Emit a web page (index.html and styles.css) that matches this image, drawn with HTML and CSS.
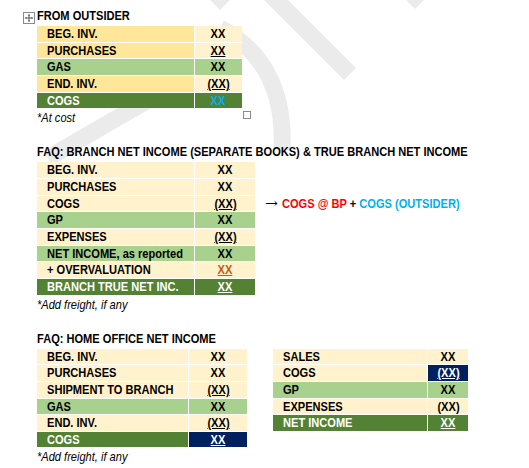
FILE: index.html
```html
<!DOCTYPE html>
<html lang="en">
<head>
    <meta charset="UTF-8">
    <meta name="viewport" content="width=device-width, initial-scale=1.0">
    <title>Branch Accounting - COGS Notes</title>
    <link rel="stylesheet" href="styles.css">
</head>
<body>
    <div class="page">
        <!-- faint logo watermark behind the sheets -->
        <svg class="watermark" width="529" height="468" viewBox="0 0 529 468">
            <g fill="none" stroke="#ebebeb" stroke-width="17">
                <line x1="266" y1="-10" x2="350" y2="74"/>
                <line x1="212" y1="-10" x2="226" y2="4"/>
                <line x1="408" y1="-10" x2="421" y2="3"/>
                <path d="M 220 28 C 262 50 285 90 282 150"/>
                <line x1="48" y1="158" x2="150" y2="99"/>
            </g>
        </svg>

        <section class="block">
            <h2 class="title">
                <span class="move-handle">
                    <svg width="12" height="12" viewBox="0 0 12 12">
                        <rect x="0.5" y="0.5" width="11" height="11" fill="#fff" stroke="#8a8a8a"/>
                        <path d="M6 2.5 V9.5 M2.5 6 H9.5" stroke="#555" stroke-width="1"/>
                        <path d="M6 2 L4.8 3.4 H7.2 Z M6 10 L4.8 8.6 H7.2 Z M2 6 L3.4 4.8 V7.2 Z M10 6 L8.6 4.8 V7.2 Z" fill="#555"/>
                    </svg>
                </span>
                <span class="txt">FROM OUTSIDER</span>
            </h2>
            <div class="sheet sheet-outsider">
                <div class="cell label gold"><span class="txt">BEG. INV.</span></div><div class="cell value cream"><span class="txt">XX</span></div>
                <div class="cell label gold"><span class="txt">PURCHASES</span></div><div class="cell value cream"><span class="txt"><u>XX</u></span></div>
                <div class="cell label green"><span class="txt">GAS</span></div><div class="cell value green"><span class="txt">XX</span></div>
                <div class="cell label gold"><span class="txt">END. INV.</span></div><div class="cell value cream"><span class="txt"><u>(XX)</u></span></div>
                <div class="cell label dark"><span class="txt">COGS</span></div><div class="cell value dark cyan-text"><span class="txt">XX</span></div>
            </div>
            <span class="resize-handle"></span>
            <p class="note"><span class="txt">*At cost</span></p>
        </section>

        <section class="block">
            <h2 class="title"><span class="txt">FAQ: BRANCH NET INCOME (SEPARATE BOOKS) &amp; TRUE BRANCH NET INCOME</span></h2>
            <div class="with-side">
                <div class="sheet sheet-branch">
                    <div class="cell label cream"><span class="txt">BEG. INV.</span></div><div class="cell value cream"><span class="txt">XX</span></div>
                    <div class="cell label cream"><span class="txt">PURCHASES</span></div><div class="cell value cream"><span class="txt">XX</span></div>
                    <div class="cell label cream"><span class="txt">COGS</span></div><div class="cell value cream"><span class="txt"><u>(XX)</u></span></div>
                    <div class="cell label green"><span class="txt">GP</span></div><div class="cell value green"><span class="txt">XX</span></div>
                    <div class="cell label cream"><span class="txt">EXPENSES</span></div><div class="cell value cream"><span class="txt"><u>(XX)</u></span></div>
                    <div class="cell label green"><span class="txt">NET INCOME, as reported</span></div><div class="cell value green"><span class="txt">XX</span></div>
                    <div class="cell label cream"><span class="txt">+ OVERVALUATION</span></div><div class="cell value cream orange-text"><span class="txt"><u>XX</u></span></div>
                    <div class="cell label dark"><span class="txt">BRANCH TRUE NET INC.</span></div><div class="cell value dark"><span class="txt"><u>XX</u></span></div>
                </div>
                <p class="side-note"><span class="arrow">&rarr;</span><span class="txt"><span class="red-text">COGS @ BP</span> + <span class="cyan-text">COGS (OUTSIDER)</span></span></p>
            </div>
            <p class="note"><span class="txt">*Add freight, if any</span></p>
        </section>

        <section class="block">
            <h2 class="title"><span class="txt">FAQ: HOME OFFICE NET INCOME</span></h2>
            <div class="with-side">
                <div>
                    <div class="sheet sheet-home">
                        <div class="cell label cream"><span class="txt">BEG. INV.</span></div><div class="cell value cream"><span class="txt">XX</span></div>
                        <div class="cell label cream"><span class="txt">PURCHASES</span></div><div class="cell value cream"><span class="txt">XX</span></div>
                        <div class="cell label cream"><span class="txt">SHIPMENT TO BRANCH</span></div><div class="cell value cream"><span class="txt"><u>(XX)</u></span></div>
                        <div class="cell label green"><span class="txt">GAS</span></div><div class="cell value green"><span class="txt">XX</span></div>
                        <div class="cell label cream"><span class="txt">END. INV.</span></div><div class="cell value cream"><span class="txt"><u>(XX)</u></span></div>
                        <div class="cell label dark"><span class="txt">COGS</span></div><div class="cell value navy"><span class="txt"><u>XX</u></span></div>
                    </div>
                    <p class="note"><span class="txt">*Add freight, if any</span></p>
                </div>
                <div class="sheet sheet-income">
                    <div class="cell label cream"><span class="txt">SALES</span></div><div class="cell value cream"><span class="txt">XX</span></div>
                    <div class="cell label cream"><span class="txt">COGS</span></div><div class="cell value navy"><span class="txt"><u>(XX)</u></span></div>
                    <div class="cell label green"><span class="txt">GP</span></div><div class="cell value green"><span class="txt">XX</span></div>
                    <div class="cell label cream"><span class="txt">EXPENSES</span></div><div class="cell value cream"><span class="txt">(XX)</span></div>
                    <div class="cell label dark"><span class="txt">NET INCOME</span></div><div class="cell value dark"><span class="txt"><u>XX</u></span></div>
                </div>
            </div>
        </section>
    </div>
</body>
</html>
```

FILE: styles.css
```css
body {
    margin: 0;
    background-color: #fff;
    font-family: 'Liberation Sans', Arial, sans-serif;
    font-size: 13.5px;
    color: #000;
}

.page {
    position: relative;
    width: 529px;
    height: 468px;
    padding: 9px 0 0 37px;
    box-sizing: border-box;
    overflow: hidden;
}

.watermark {
    position: absolute;
    left: 0;
    top: 0;
    z-index: -1;
}

/* no narrow face installed: squeeze Arial-metric text like Arial Narrow */
.txt {
    display: inline-block;
    transform: scaleX(0.82);
    transform-origin: left center;
}

.value .txt {
    transform-origin: center center;
}

.block {
    position: relative;
    margin-bottom: 20px;
}

.title {
    position: relative;
    margin: 0 0 3px;
    font-size: 13.5px;
    line-height: 14px;
    font-weight: bold;
    white-space: nowrap;
}

.move-handle {
    position: absolute;
    left: -14px;
    top: 3px;
    width: 12px;
    height: 12px;
}

.move-handle svg {
    display: block;
}

.resize-handle {
    position: absolute;
    left: 206px;
    top: 102px;
    width: 6px;
    height: 6px;
    border: 1px solid #8a8a8a;
    background: #fff;
}

.sheet {
    display: grid;
    grid-auto-rows: 15.67px;
    gap: 1px;
    background-color: #fff;
    font-weight: bold;
    line-height: 15.67px;
}

.sheet-outsider {
    grid-template-columns: 157px 47px;
    width: 205px;
}

.sheet-branch {
    grid-template-columns: 157px 60px;
    width: 218px;
}

.sheet-home {
    grid-template-columns: 151px 58px;
    width: 210px;
}

.sheet-income {
    grid-template-columns: 154px 40px;
    width: 195px;
}

.cell {
    white-space: nowrap;
}

.label {
    padding-left: 10px;
}

.value {
    text-align: center;
}

.value u {
    text-underline-offset: 1px;
}

.gold {
    background-color: #ffe699;
}

.cream {
    background-color: #fff2cc;
}

.green {
    background-color: #a9d18e;
}

.dark {
    background-color: #548235;
    color: #fff;
}

.navy {
    background-color: #002060;
    color: #fff;
}

.cyan-text {
    color: #00b0f0;
}

.red-text {
    color: #ff0000;
}

.orange-text {
    color: #c55a11;
}

.note {
    margin: 3px 0 0;
    font-style: italic;
    line-height: 14px;
    white-space: nowrap;
}

.with-side {
    display: flex;
    align-items: flex-start;
    gap: 10px;
}

.block:last-child .with-side {
    gap: 26px;
}

.side-note {
    margin: 33.3px 0 0;
    line-height: 15.67px;
    font-weight: bold;
    white-space: nowrap;
}

.arrow {
    display: inline-block;
    width: 17px;
    font-family: 'DejaVu Serif', serif;
    font-weight: normal;
    font-size: 14px;
    transform: scaleX(1.1);
    transform-origin: left center;
}
```
